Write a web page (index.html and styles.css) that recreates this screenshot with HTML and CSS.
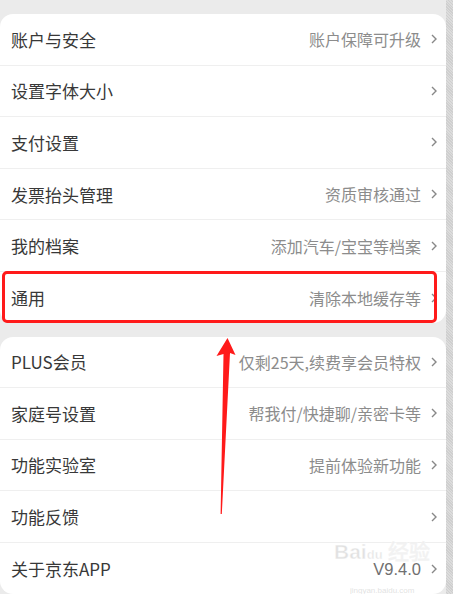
FILE: index.html
```html
<!DOCTYPE html>
<html lang="zh-CN">
<head>
    <meta charset="UTF-8">
    <meta name="viewport" content="width=device-width, initial-scale=1.0">
    <title>设置</title>
    <link rel="stylesheet" href="styles.css">
</head>
<body>
    <div class="screen">
        <div class="settings">
            <!-- Group 1 -->
            <div class="card">
                <div class="row"><span class="label">账户与安全</span><span class="value">账户保障可升级</span><svg class="chev" viewBox="0 0 6 10"><path d="M1 1 L5 5 L1 9"/></svg></div>
                <div class="row"><span class="label">设置字体大小</span><span class="value"></span><svg class="chev" viewBox="0 0 6 10"><path d="M1 1 L5 5 L1 9"/></svg></div>
                <div class="row"><span class="label">支付设置</span><span class="value"></span><svg class="chev" viewBox="0 0 6 10"><path d="M1 1 L5 5 L1 9"/></svg></div>
                <div class="row"><span class="label">发票抬头管理</span><span class="value">资质审核通过</span><svg class="chev" viewBox="0 0 6 10"><path d="M1 1 L5 5 L1 9"/></svg></div>
                <div class="row"><span class="label">我的档案</span><span class="value">添加汽车/宝宝等档案</span><svg class="chev" viewBox="0 0 6 10"><path d="M1 1 L5 5 L1 9"/></svg></div>
                <div class="row"><span class="label">通用</span><span class="value">清除本地缓存等</span><svg class="chev" viewBox="0 0 6 10"><path d="M1 1 L5 5 L1 9"/></svg></div>
            </div>
            <!-- Group 2 -->
            <div class="card">
                <div class="row"><span class="label">PLUS会员</span><span class="value">仅剩25天,续费享会员特权</span><svg class="chev" viewBox="0 0 6 10"><path d="M1 1 L5 5 L1 9"/></svg></div>
                <div class="row"><span class="label">家庭号设置</span><span class="value">帮我付/快捷聊/亲密卡等</span><svg class="chev" viewBox="0 0 6 10"><path d="M1 1 L5 5 L1 9"/></svg></div>
                <div class="row"><span class="label">功能实验室</span><span class="value">提前体验新功能</span><svg class="chev" viewBox="0 0 6 10"><path d="M1 1 L5 5 L1 9"/></svg></div>
                <div class="row"><span class="label">功能反馈</span><span class="value"></span><svg class="chev" viewBox="0 0 6 10"><path d="M1 1 L5 5 L1 9"/></svg></div>
                <div class="row"><span class="label">关于京东APP</span><span class="value version">V9.4.0</span><svg class="chev" viewBox="0 0 6 10"><path d="M1 1 L5 5 L1 9"/></svg></div>
            </div>
        </div>
        <div class="scroll-strip"></div>
    </div>

    <!-- Annotation overlay -->
    <div class="highlight-box"></div>
    <svg class="arrow" width="453" height="594" viewBox="0 0 453 594">
        <polygon points="227.5,338 235.5,355 230,353 221.8,514 220.6,514 223.5,354 216.5,356"/>
    </svg>

    <!-- Watermark -->
    <div class="watermark">
        <div class="wm-logo">Bai<span class="wm-paw">du</span> 经验</div>
        <div class="wm-url">jingyan.baidu.com</div>
    </div>
</body>
</html>
```

FILE: styles.css
```css
* {margin: 0; padding: 0; box-sizing: border-box;}
body {font-family: "Noto Sans CJK SC", "Noto Sans", sans-serif; background-color: #ebebeb; color: #333; width: 453px; height: 594px; overflow: hidden; position: relative;}
.screen {display: flex; height: 594px;}
.settings {width: 446px; padding-top: 14px; display: flex; flex-direction: column; gap: 13.5px;}
.scroll-strip {width: 7px; background: repeating-linear-gradient(45deg, #dcdcdc 0, #dcdcdc 1px, #cfcfcf 1px, #cfcfcf 2px);}
.card {background: #fff; border-radius: 13px; overflow: hidden;}
.row {height: 51.6px; display: flex; align-items: center; padding: 0 9px 0 11px; border-bottom: 1px solid #efefef;}
.row:last-child {border-bottom: none;}
.label {font-size: 17px; color: #383838; flex: 1;}
.value {font-size: 16px; color: #8c8c8c; margin-right: 10px;}
.value.version {color: #707070; font-family: "Liberation Sans", sans-serif; font-size: 16.5px; line-height: 18px;}
.chev {width: 6px; height: 10px; fill: none; stroke: #888; stroke-width: 1.4;}
/* annotation */
.highlight-box {position: absolute; left: 2px; top: 271px; width: 435px; height: 52px; border: 3px solid #ff1a1a; border-radius: 5px;}
.arrow {position: absolute; left: 0; top: 0;}
.arrow polygon {fill: #ff1a1a;}
.watermark {position: absolute; left: 334px; top: 542px; color: rgba(205,205,205,0.6); text-align: center;}
.wm-logo {font-family: "Liberation Sans", sans-serif; font-size: 21px; font-weight: bold; line-height: 19px; -webkit-text-stroke: 1px rgba(255,255,255,0.6);}
.wm-paw {font-size: 13px;}
.wm-url {font-family: "Liberation Sans", sans-serif; font-size: 8px; line-height: 10px; margin-top: 22px;}
```
